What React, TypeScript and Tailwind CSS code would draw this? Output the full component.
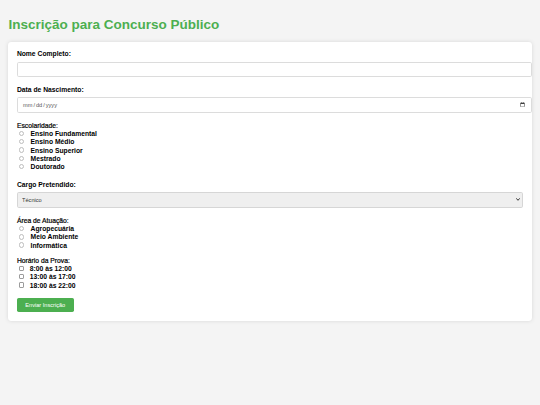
import React from 'react';

const escolaridade = ['Ensino Fundamental', 'Ensino Médio', 'Ensino Superior', 'Mestrado', 'Doutorado'];
const areas = ['Agropecuária', 'Meio Ambiente', 'Informática'];
const horarios = ['8:00 às 12:00', '13:00 às 17:00', '18:00 às 22:00'];

function Radio({ label }: { label: string }) {
  return (
    <div className="flex h-[8.33px] items-start">
      <span className="ml-[2.1px] mt-[1px] h-[5.5px] w-[5.5px] shrink-0 rounded-full border border-[#bdbdbd] bg-white" />
      <span className="ml-[6.1px] mt-[0.28px] text-[6.75px] font-bold leading-[7.76px] text-black">{label}</span>
    </div>
  );
}

function Check({ label }: { label: string }) {
  return (
    <div className="flex h-[8.33px] items-start">
      <span className="ml-[1.7px] mt-[1px] h-[5.3px] w-[5.3px] shrink-0 rounded-[1px] border border-[#9c9c9c] bg-white" />
      <span className="ml-[5.9px] mt-[0.28px] text-[6.75px] font-bold leading-[7.76px] text-black">{label}</span>
    </div>
  );
}

export default function App() {
  return (
    <div className="min-h-screen bg-[#f4f4f4] p-[8.44px] font-['Liberation_Sans',Arial,sans-serif] text-black">
      <h1 className="my-[9.05px] text-[13.5px] font-bold leading-[15.5px] text-[#4caf50]">
        Inscrição para Concurso Público
      </h1>

      <form className="rounded-[3.4px] bg-white p-[8.44px] shadow-[0_0_4.2px_rgba(0,0,0,0.12)]">
        {/* Nome */}
        <label className="block text-[6.75px] font-bold leading-[7.76px]">Nome Completo:</label>
        <input
          type="text"
          className="mt-[3.7px] block h-[15.2px] w-[515.5px] rounded-[1.7px] border border-[#dcdcdc] bg-white px-[4.2px] text-[5.6px] outline-none"
        />

        {/* Data */}
        <label className="mt-[8.9px] block text-[6.75px] font-bold leading-[7.76px]">Data de Nascimento:</label>
        <input
          type="date"
          className="mt-[3.7px] block h-[15.2px] w-[515.5px] rounded-[1.7px] border border-[#dcdcdc] bg-white px-[4.2px] text-[5.6px] text-[#555] outline-none"
        />

        {/* Escolaridade */}
        <div className="mt-[9.2px] text-[6.75px] leading-[7.76px] [-webkit-text-stroke:0.2px_#000]">Escolaridade:</div>
        <div>
          {escolaridade.map((e) => (
            <Radio key={e} label={e} />
          ))}
        </div>

        {/* Cargo */}
        <label className="mt-[9.4px] block text-[6.75px] font-bold leading-[7.76px]">Cargo Pretendido:</label>
        <div className="relative mt-[3.44px]">
          <select
            defaultValue="tecnico"
            className="block h-[16px] w-full appearance-none rounded-[1.7px] border border-[#d6d6d6] bg-[#efefef] px-[4.2px] text-[5.6px] text-[#333] outline-none"
          >
            <option value="tecnico">Técnico</option>
            <option value="analista">Analista</option>
          </select>
          <svg
            className="pointer-events-none absolute right-[3.5px] top-[6.3px] h-[3px] w-[4px]"
            viewBox="0 0 8 6"
            fill="none"
          >
            <path d="M1 1.2 L4 4.6 L7 1.2" stroke="#222" strokeWidth="1.8" strokeLinecap="round" strokeLinejoin="round" />
          </svg>
        </div>

        {/* Área */}
        <div className="mt-[9.1px] text-[6.75px] leading-[7.76px] [-webkit-text-stroke:0.2px_#000]">Área de Atuação:</div>
        <div>
          {areas.map((a) => (
            <Radio key={a} label={a} />
          ))}
        </div>

        {/* Horário */}
        <div className="mt-[7.25px] text-[6.75px] leading-[7.76px] [-webkit-text-stroke:0.2px_#000]">Horário da Prova:</div>
        <div>
          {horarios.map((h) => (
            <Check key={h} label={h} />
          ))}
        </div>

        <button
          type="button"
          className="mt-[8.15px] block h-[14.3px] rounded-[1.7px] bg-[#4caf50] px-[8.44px] text-[5.625px] leading-[14.3px] text-white"
        >
          Enviar Inscrição
        </button>
      </form>
    </div>
  );
}
